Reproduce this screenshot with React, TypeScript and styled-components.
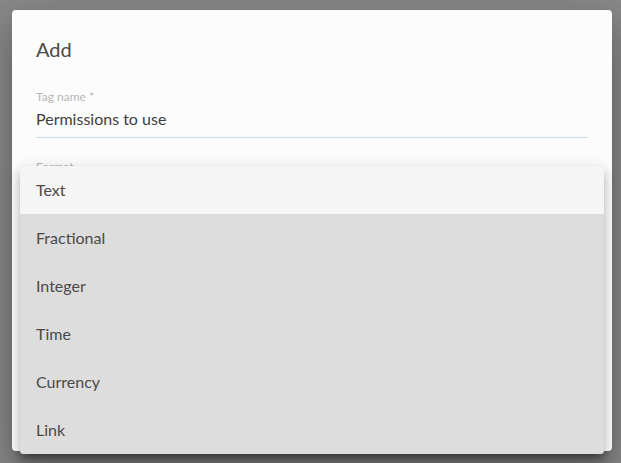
import * as React from "react";
import styled, { createGlobalStyle } from "styled-components";

const fontStack = `"Segoe UI", Lato, "Liberation Sans", sans-serif`;

const GlobalStyle = createGlobalStyle`
  html, body {
    margin: 0;
    padding: 0;
    background: #898989;
    font-family: ${fontStack};
  }
`;

const Backdrop = styled.div`
  width: 621px;
  height: 463px;
  padding: 10px 9px 12px 12px;
  box-sizing: border-box;
  background: #898989;
  display: flex;
`;

const Dialog = styled.div`
  position: relative;
  flex: 1;
  background: #fcfcfc;
  border-radius: 4px;
  box-shadow: 0 11px 15px -7px rgba(0, 0, 0, 0.2),
    0 24px 38px 3px rgba(0, 0, 0, 0.14), 0 9px 46px 8px rgba(0, 0, 0, 0.12);
  padding: 26px 24px 0;
  display: flex;
  flex-direction: column;
`;

const Title = styled.h2`
  margin: 0;
  font-size: 20px;
  font-weight: 400;
  line-height: 26px;
  color: #4a4a4a;
`;

const Field = styled.div<{ $top: number }>`
  display: flex;
  flex-direction: column;
  margin-top: ${(p) => p.$top}px;
`;

const Label = styled.label`
  font-size: 12px;
  line-height: 14px;
  color: #b8b8b8;
`;

const InputText = styled.div`
  font-size: 16px;
  line-height: 22px;
  color: #3e3e3e;
  padding: 4px 0 7px;
`;

const Underline = styled.div`
  height: 1px;
  background: #c6e0eb;
`;

const Menu = styled.ul`
  position: absolute;
  left: 8px;
  right: 8px;
  top: 156px;
  margin: 0;
  padding: 0;
  list-style: none;
  border-radius: 4px;
  overflow: hidden;
  background: #dddddd;
  box-shadow: 0 5px 5px -3px rgba(0, 0, 0, 0.2),
    0 8px 10px 1px rgba(0, 0, 0, 0.14), 0 3px 14px 2px rgba(0, 0, 0, 0.12);
`;

const MenuItem = styled.li<{ $selected?: boolean }>`
  height: 48px;
  box-sizing: border-box;
  display: flex;
  align-items: center;
  padding: 0 16px 2px;
  font-size: 16px;
  color: #4a4a4a;
  background: ${(p) => (p.$selected ? "#f5f5f5" : "#dddddd")};
`;

const formats = ["Text", "Fractional", "Integer", "Time", "Currency", "Link"];

export default function App() {
  return (
    <>
      <GlobalStyle />
      <Backdrop>
        <Dialog>
          <Title>Add</Title>
          <Field $top={28}>
            <Label>Tag name *</Label>
            <InputText>Permissions to use</InputText>
            <Underline />
          </Field>
          <Field $top={22}>
            <Label>Format</Label>
          </Field>
          <Menu>
            {formats.map((f, i) => (
              <MenuItem key={f} $selected={i === 0}>
                {f}
              </MenuItem>
            ))}
          </Menu>
        </Dialog>
      </Backdrop>
    </>
  );
}
